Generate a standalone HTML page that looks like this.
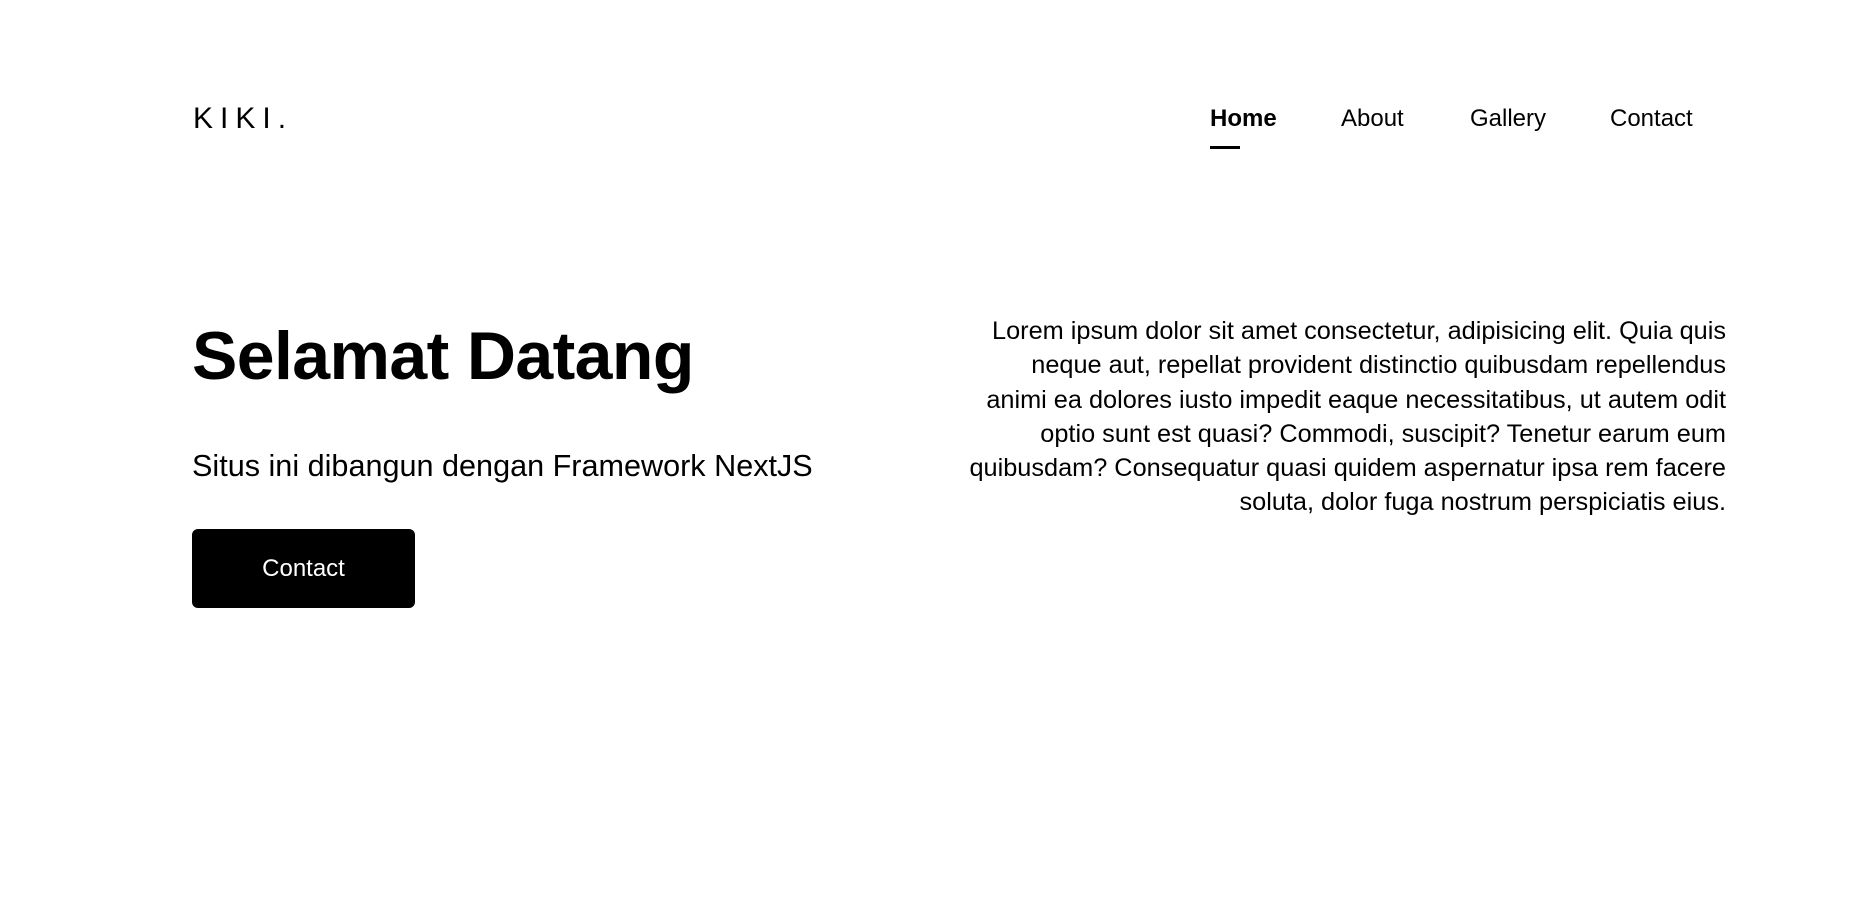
<!DOCTYPE html>
<html><head><meta charset="utf-8"><style>
html,body{margin:0;padding:0;background:#fff;width:1876px;height:924px;overflow:hidden;font-family:"Liberation Sans",sans-serif;color:#000}
.logo{position:absolute;left:193px;top:104px;font-size:30px;letter-spacing:7px;line-height:30px}
.nav a{position:absolute;top:104px;font-size:24px;line-height:30px;color:#000;text-decoration:none}
.ul{position:absolute;left:1210px;top:146px;width:30px;height:3px;background:#000}
h1{position:absolute;left:192px;top:316px;margin:0;font-size:68px;line-height:80px;font-weight:bold;letter-spacing:-0.6px}
.sub{position:absolute;left:192px;top:446px;font-size:30.6px;line-height:40px;white-space:nowrap}
.btn{position:absolute;left:192px;top:529px;width:223px;height:79px;background:#000;border-radius:6px;color:#fff;font-size:24px;line-height:79px;text-align:center}
.p{position:absolute;right:150px;top:314px;font-size:25.3px;line-height:34.3px;text-align:right;white-space:nowrap}
</style></head><body>
<div class="logo">KIKI.</div>
<div class="nav">
<a style="left:1210px;font-weight:bold">Home</a>
<a style="left:1341px">About</a>
<a style="left:1470px">Gallery</a>
<a style="left:1610px">Contact</a>
</div>
<div class="ul"></div>
<h1>Selamat Datang</h1>
<div class="sub">Situs ini dibangun dengan Framework NextJS</div>
<div class="btn">Contact</div>
<div class="p">Lorem ipsum dolor sit amet consectetur, adipisicing elit. Quia quis<br>neque aut, repellat provident distinctio quibusdam repellendus<br>animi ea dolores iusto impedit eaque necessitatibus, ut autem odit<br>optio sunt est quasi? Commodi, suscipit? Tenetur earum eum<br>quibusdam? Consequatur quasi quidem aspernatur ipsa rem facere<br>soluta, dolor fuga nostrum perspiciatis eius.</div>
</body></html>
